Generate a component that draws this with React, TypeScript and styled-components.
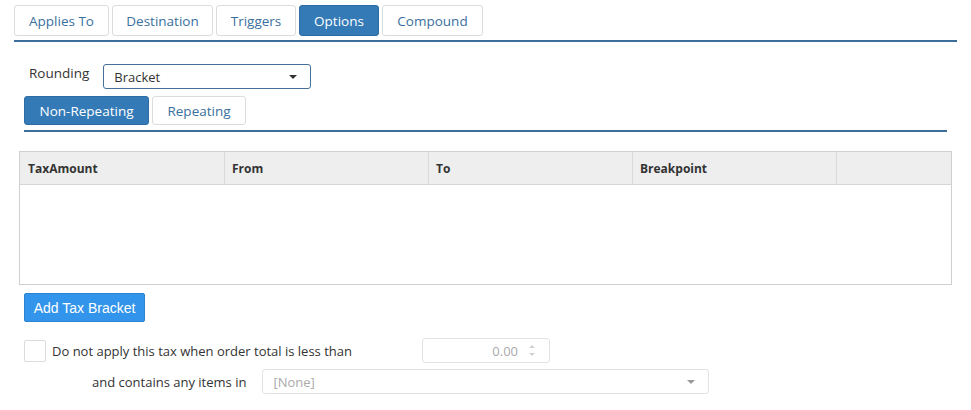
import React, { useState } from 'react';
import styled, { createGlobalStyle } from 'styled-components';

const GlobalStyle = createGlobalStyle`
  html, body {
    margin: 0;
    padding: 0;
    background: #fff;
  }
  body {
    font-family: 'Open Sans', 'Noto Sans', sans-serif;
    font-size: 13px;
    color: #333;
  }
`;

const Page = styled.div`
  width: 943px;
  padding: 5px 0 0 14px;
`;

const TabBar = styled.div`
  display: flex;
  gap: 3px;
`;

const Tab = styled.button<{ $active?: boolean; $width: number; $height: number }>`
  box-sizing: border-box;
  width: ${(p) => p.$width}px;
  height: ${(p) => p.$height}px;
  padding: 0;
  border: 1px solid ${(p) => (p.$active ? '#2e6da4' : '#dcdcdc')};
  border-radius: 3px;
  background: ${(p) => (p.$active ? '#337ab7' : '#fff')};
  color: ${(p) => (p.$active ? '#fff' : '#3a6f9e')};
  font-family: inherit;
  font-size: 13.5px;
  cursor: pointer;
`;

const Rule = styled.div<{ $top: number }>`
  height: 2px;
  margin-top: ${(p) => p.$top}px;
  background: #3b6e9c;
`;

const Options = styled.div`
  padding: 0 10px 0 10px;
`;

const RoundingRow = styled.div`
  display: flex;
  align-items: flex-start;
  gap: 14px;
  margin-top: 22px;
  padding-left: 5px;
`;

const FieldLabel = styled.span`
  font-size: 13.5px;
  line-height: 18px;
`;

const Select = styled.div<{ $width: number; $muted?: boolean }>`
  box-sizing: border-box;
  display: flex;
  align-items: center;
  justify-content: space-between;
  width: ${(p) => p.$width}px;
  height: 25px;
  padding: 0 13px 0 10px;
  border: 1px solid ${(p) => (p.$muted ? '#e3e3e3' : '#44709a')};
  border-radius: 3px;
  color: ${(p) => (p.$muted ? '#aaa' : '#333')};
  font-size: 13px;
`;

const Caret = styled.span<{ $muted?: boolean }>`
  width: 0;
  height: 0;
  border-left: 4px solid transparent;
  border-right: 4px solid transparent;
  border-top: 4px solid ${(p) => (p.$muted ? '#999' : '#333')};
`;

const SubTabs = styled(TabBar)`
  margin-top: 7px;
`;

const Grid = styled.div`
  box-sizing: border-box;
  width: 933px;
  height: 134px;
  margin: 19px 0 0 5px;
  border: 1px solid #cfcfcf;
`;

const GridHead = styled.div`
  display: grid;
  grid-template-columns: 204px 204px 204px 204px 1fr;
  height: 32px;
  background: #eee;
  border-bottom: 1px solid #d6d6d6;
`;

const HeadCell = styled.div`
  display: flex;
  align-items: center;
  padding-left: 8px;
  font-size: 12px;
  font-weight: 700;
  color: #333;
  & + & {
    padding-left: 7px;
    border-left: 1px solid #dadada;
  }
`;

const AddButton = styled.button`
  box-sizing: border-box;
  width: 121px;
  height: 29px;
  margin: 8px 0 0 10px;
  padding: 0;
  background: #3294ea;
  border: 1px solid #2a82d0;
  border-radius: 2px;
  color: #fff;
  font-family: 'Liberation Sans', Arial, sans-serif;
  font-size: 14px;
  cursor: pointer;
`;

const ConditionRow = styled.div`
  display: flex;
  align-items: center;
  margin: 16px 0 0 10px;
`;

const CheckLabel = styled.label`
  display: flex;
  align-items: center;
  gap: 6px;
  width: 398px;
  font-size: 13px;
`;

const CheckBox = styled.span`
  box-sizing: border-box;
  width: 22px;
  height: 22px;
  border: 1px solid #dcdcdc;
  border-radius: 2px;
`;

const NumberBox = styled.div`
  box-sizing: border-box;
  display: flex;
  align-items: center;
  justify-content: flex-end;
  gap: 11px;
  width: 128px;
  height: 25px;
  padding-right: 14px;
  border: 1px solid #e3e3e3;
  border-radius: 3px;
  color: #aaa;
  font-size: 13px;
`;

const Spinner = styled.span`
  display: flex;
  flex-direction: column;
  gap: 5px;
`;

const Arrow = styled.span<{ $up?: boolean }>`
  width: 0;
  height: 0;
  border-left: 3px solid transparent;
  border-right: 3px solid transparent;
  ${(p) => (p.$up ? 'border-bottom' : 'border-top')}: 3px solid #d0d0d0;
`;

const ItemsRow = styled.div`
  display: flex;
  align-items: center;
  gap: 16px;
  margin: 6px 0 0 78px;
  font-size: 13px;
`;

const mainTabs = [
  { label: 'Applies To', width: 95 },
  { label: 'Destination', width: 101 },
  { label: 'Triggers', width: 80 },
  { label: 'Options', width: 80 },
  { label: 'Compound', width: 101 },
];

const bracketTabs = [
  { label: 'Non-Repeating', width: 125 },
  { label: 'Repeating', width: 94 },
];

const columns = ['TaxAmount', 'From', 'To', 'Breakpoint', ''];

const App = () => {
  const [tab, setTab] = useState('Options');
  const [mode, setMode] = useState('Non-Repeating');

  return (
    <Page>
      <GlobalStyle />
      <TabBar>
        {mainTabs.map((t) => (
          <Tab
            key={t.label}
            $width={t.width}
            $height={31}
            $active={tab === t.label}
            onClick={() => setTab(t.label)}
          >
            {t.label}
          </Tab>
        ))}
      </TabBar>
      <Rule $top={4} />
      <Options>
        <RoundingRow>
          <FieldLabel>Rounding</FieldLabel>
          <Select $width={208}>
            Bracket
            <Caret />
          </Select>
        </RoundingRow>
        <SubTabs>
          {bracketTabs.map((t) => (
            <Tab
              key={t.label}
              $width={t.width}
              $height={29}
              $active={mode === t.label}
              onClick={() => setMode(t.label)}
            >
              {t.label}
            </Tab>
          ))}
        </SubTabs>
        <Rule $top={5} />
      </Options>
      <Grid>
        <GridHead>
          {columns.map((c, i) => (
            <HeadCell key={i}>{c}</HeadCell>
          ))}
        </GridHead>
      </Grid>
      <AddButton>Add Tax Bracket</AddButton>
      <ConditionRow>
        <CheckLabel>
          <CheckBox />
          Do not apply this tax when order total is less than
        </CheckLabel>
        <NumberBox>
          0.00
          <Spinner>
            <Arrow $up />
            <Arrow />
          </Spinner>
        </NumberBox>
      </ConditionRow>
      <ItemsRow>
        and contains any items in
        <Select $width={447} $muted>
          [None]
          <Caret $muted />
        </Select>
      </ItemsRow>
    </Page>
  );
};

export default App;
